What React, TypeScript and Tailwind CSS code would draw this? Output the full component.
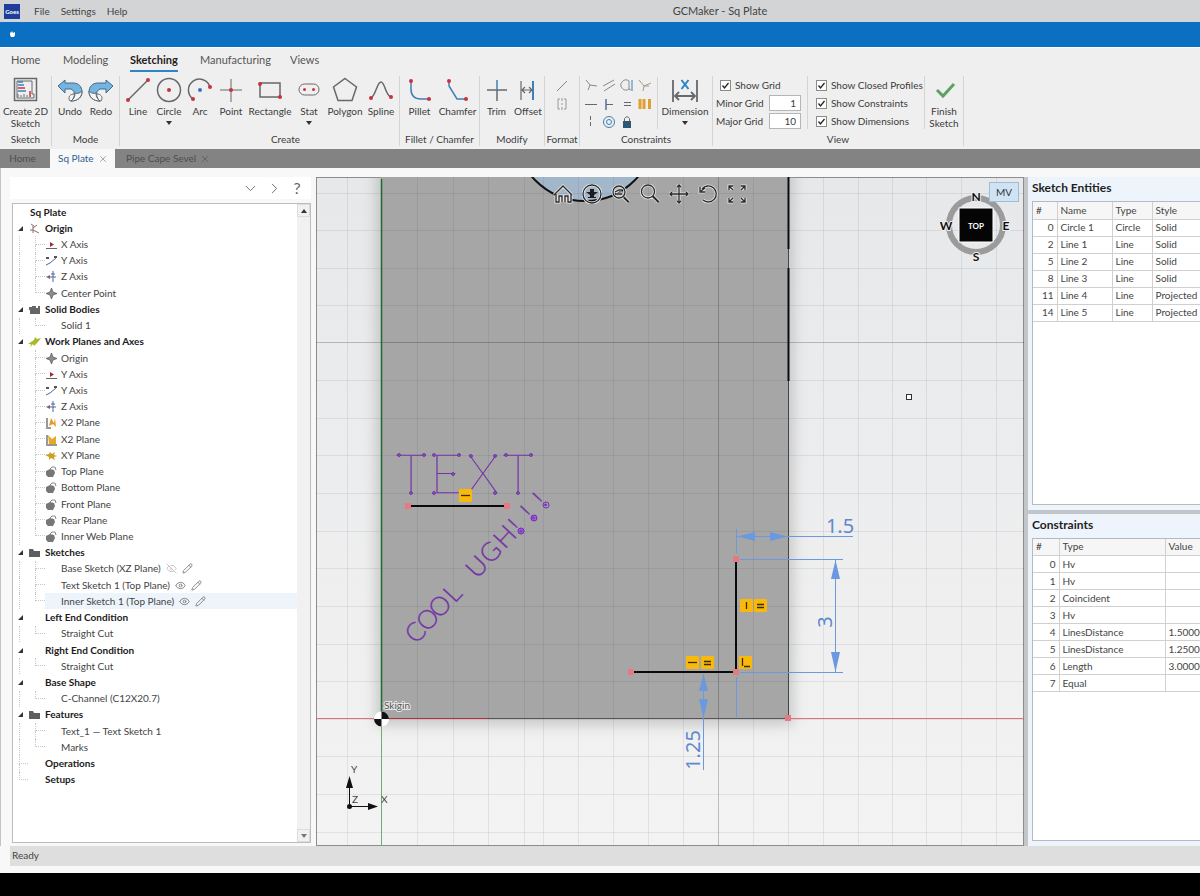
import type { ReactNode } from 'react';
import { ChevronDown, ChevronRight, Eye, EyeOff, Pencil, X } from 'lucide-react';

const RED = '#c8323c';
const GREY = '#66686b';
const BLUE = '#3f7fb8';

/* ---------- ribbon ---------- */

function Dot({ x, y, c = RED }: { x: number; y: number; c?: string }) {
  return <circle cx={x} cy={y} r={2} fill={c} stroke="none" />;
}

function Icon({ children, w = 26 }: { children: ReactNode; w?: number }) {
  return (
    <svg width={w} height={26} viewBox={`0 0 ${w} 26`} fill="none" stroke={GREY} strokeWidth={1.5}>
      {children}
    </svg>
  );
}

const icons = {
  create: (
    <Icon>
      <rect x="1.5" y="1.5" width="22" height="22" />
      <path d="M4 4H19V17H21V21H4Z" strokeWidth="1" />
      <path d="M5 5H10M5 8H11" stroke={BLUE} />
      <path d="M5 11H12M17 14V20" stroke={RED} />
      <path d="M5 14H13" stroke={BLUE} />
      <path d="M5 20V17M8 20V18M11 20V17M14 20V18" strokeWidth="1" />
    </Icon>
  ),
  undo: (
    <Icon>
      <path d="M13 24C11 21 12 18 16 17H20L17 23Z" fill="#f5f5f5" strokeWidth="1" />
      <path d="M1 9L8 3V6H16C22 6 25 10 25 15C25 20 21 24 14 24C18 21 19 14 14 12H8V16Z" fill="#74b4e0" stroke="#44698a" strokeWidth="1" />
      <path d="M25 14C25 20 21 24 14 24C17 22 18 19 18 16C21 17 23 16 25 14Z" fill="#f5f5f5" strokeWidth="1" />
    </Icon>
  ),
  redo: (
    <Icon>
      <path d="M13 24C15 21 14 18 10 17H6L9 23Z" fill="#f5f5f5" strokeWidth="1" />
      <path d="M25 9L18 3V6H10C4 6 1 10 1 15C1 20 5 24 12 24C8 21 7 14 12 12H18V16Z" fill="#74b4e0" stroke="#44698a" strokeWidth="1" />
      <path d="M1 14C1 20 5 24 12 24C9 22 8 19 8 16C5 17 3 16 1 14Z" fill="#f5f5f5" strokeWidth="1" />
    </Icon>
  ),
  line: (
    <Icon>
      <path d="M3 23L23 3" />
      <Dot x={3} y={23} />
      <Dot x={23} y={3} />
    </Icon>
  ),
  circle: (
    <Icon>
      <circle cx="13" cy="13" r="11.5" />
      <Dot x={13} y={13} />
    </Icon>
  ),
  arc: (
    <Icon>
      <path d="M6 22A11 11 0 1 1 23 10" />
      <Dot x={6} y={22} />
      <Dot x={23} y={10} />
      <Dot x={13} y={13} c="#3a6fc4" />
    </Icon>
  ),
  point: (
    <Icon>
      <path d="M13 2V25M2 13H24" strokeWidth="1" />
      <Dot x={13} y={13} />
    </Icon>
  ),
  rectangle: (
    <Icon>
      <path d="M3 6H23V20H3Z" />
      <Dot x={3} y={7} />
      <Dot x={23} y={20} />
    </Icon>
  ),
  slot: (
    <Icon>
      <rect x="3" y="7" width="20" height="11" rx="5.5" strokeWidth="1" />
      <circle cx="8.5" cy="12.5" r="1.5" fill={RED} stroke="none" />
      <circle cx="17.5" cy="12.5" r="1.5" fill={RED} stroke="none" />
    </Icon>
  ),
  polygon: (
    <Icon>
      <path d="M13 1.500L24.500 10L20 23.500H6L1.500 10Z" />
    </Icon>
  ),
  spline: (
    <Icon>
      <path d="M3 21C8 18 9 5 13 5C17 5 17 18 23 20" />
      <Dot x={3} y={21} />
      <Dot x={23} y={20} />
    </Icon>
  ),
  fillet: (
    <Icon>
      <path d="M4 4V12C4 19 7 22 14 22H22" stroke={BLUE} />
      <Dot x={4} y={4} />
      <Dot x={22} y={22} />
    </Icon>
  ),
  chamfer: (
    <Icon>
      <path d="M4 4V9L12 22H21" stroke={BLUE} />
      <Dot x={4} y={4} />
      <Dot x={21} y={22} />
    </Icon>
  ),
  trim: (
    <Icon>
      <path d="M3 13H23" />
      <path d="M13 3V13" stroke={BLUE} />
      <path d="M13 13V24" />
    </Icon>
  ),
  offset: (
    <Icon>
      <path d="M6 4V23M6 13H17M10 10L7 13L10 16M14 10L17 13L14 16" strokeWidth="1.2" />
      <path d="M18 4V23" stroke={BLUE} strokeWidth="2" />
    </Icon>
  ),
  dimension: (
    <Icon w={28}>
      <path d="M2 3V25M26 3V25M4 19H24M8 15L4 19L8 23M20 15L24 19L20 23" strokeWidth="1.8" />
      <path d="M10.500 3L17.500 12M17.500 3L10.500 12" stroke="#2f83c5" strokeWidth="2" />
    </Icon>
  ),
  finish: (
    <Icon>
      <path d="M6 13L12 19L23 7" stroke="#5fa067" strokeWidth="3" />
    </Icon>
  ),
};

function Caret() {
  return <span className="mt-1 border-x-3 border-t-4 border-x-transparent border-t-[#333]" />;
}

function Tool({ icon, label, width, caret }: { icon: ReactNode; label: string; width: string; caret?: boolean }) {
  return (
    <button className={`flex flex-col items-center ${width}`}>
      {icon}
      <span className="mt-[2px] text-[10px] leading-[12px] whitespace-pre-line">{label}</span>
      {caret && <Caret />}
    </button>
  );
}

interface GroupProps {
  name: string;
  width: string;
  nameClass?: string;
  children: ReactNode;
}

function Group({ name, width, nameClass = '', children }: GroupProps) {
  return (
    <section className={`flex h-[70px] shrink-0 flex-col items-center border-r border-[#d4d4d4] ${width}`}>
      <div className="flex h-[58px] w-full justify-center pt-px">{children}</div>
      <h2 className={`text-[10px] leading-[14px] whitespace-nowrap ${nameClass}`}>{name}</h2>
    </section>
  );
}

function Check({ label }: { label: string }) {
  return (
    <label className="flex h-[18px] shrink-0 items-center gap-1 text-[10px] whitespace-nowrap">
      <span className="relative h-[11px] w-[11px]">
        <input type="checkbox" defaultChecked className="block h-[11px] w-[11px] appearance-none border border-[#8b8b8b] bg-white" />
        <svg className="pointer-events-none absolute inset-0" width="11" height="11" fill="none" stroke="#222" strokeWidth="1.3">
          <path d="M2.500 5.500L4.500 8L8.500 3" />
        </svg>
      </span>
      {label}
    </label>
  );
}

function GridSize({ label, value }: { label: string; value: string }) {
  return (
    <label className="flex h-[18px] shrink-0 items-center justify-between text-[10px] whitespace-nowrap">
      {label}
      <input defaultValue={value} className="h-[16px] w-[32px] border border-[#b5b5b5] bg-white px-1 text-right" />
    </label>
  );
}

const constraintIcons: { name: string; draw: ReactNode }[] = [
  { name: 'Coincident', draw: <path d="M4 3L8 8L15 9M8 8L6 13" stroke="#888" /> },
  { name: 'Parallel', draw: <path d="M3 9L14 3M4 14L15 7" stroke="#888" /> },
  { name: 'Tangent', draw: <><path d="M11 4A5 5 0 1 0 11 12V4M11 12L13 13" stroke="#888" /><path d="M14 3V14" stroke={BLUE} /></> },
  { name: 'Perpendicular', draw: <path d="M3 3L8 9L15 6M8 9L7 14M8 9H13" stroke="#a69c88" /> },
  { name: 'Horizontal', draw: <path d="M3 9.500H15" /> },
  { name: 'Midpoint', draw: <><path d="M6 4V15" stroke="#5b6c97" strokeWidth="1.5" /><path d="M6 9.500H13" /></> },
  { name: 'Equal', draw: <path d="M6 7.500H13M6 10.500H13" /> },
  { name: 'Symmetric', draw: <path d="M4 4V14M8 4V14M13.500 4V14" stroke="#e0a030" strokeWidth="3" /> },
  { name: 'Vertical', draw: <path d="M8.500 3V15" strokeDasharray="4 2" /> },
  { name: 'Concentric', draw: <><circle cx="9" cy="9" r="5.500" stroke={BLUE} /><circle cx="9" cy="9" r="2.500" stroke={BLUE} /></> },
  { name: 'Lock', draw: <><rect x="5" y="8" width="8" height="7" fill="#2c5876" stroke="none" /><path d="M6.500 8V5.500Q9 2 11.500 5.500V8" /></> },
];

function SmallIcon({ name, children }: { name: string; children: ReactNode }) {
  return (
    <button aria-label={name} className="h-[18px] w-[18px]">
      <svg width="18" height="18" fill="none" stroke={GREY} strokeWidth="1">
        {children}
      </svg>
    </button>
  );
}

const ribbonTabs = [
  { name: 'Home', width: 'w-[52px]' },
  { name: 'Modeling', width: 'w-[67px]' },
  { name: 'Sketching', width: 'w-[70px]', active: true },
  { name: 'Manufacturing', width: 'w-[90px]' },
  { name: 'Views', width: 'w-[52px]' },
];

function Ribbon() {
  return (
    <header className="h-[102px] shrink-0 overflow-hidden border-t border-white bg-[#efefef] text-[#3c3c3c]">
      <nav className="flex h-[28px] pl-[11px] text-[11px] text-[#555]">
        {ribbonTabs.map((tab) => (
          <div key={tab.name} className={`shrink-0 ${tab.width}`}>
            <button
              className={
                tab.active
                  ? 'h-[24px] border-b-2 border-[#2c86c8] pt-[2px] font-bold text-[#1c1c1c]'
                  : 'h-[24px] border-b-2 border-transparent pt-[2px]'
              }
            >
              {tab.name}
            </button>
          </div>
        ))}
      </nav>
      <div className="flex">
        <Group name="Sketch" width="w-[52px]">
          <Tool icon={icons.create} label={'Create 2D\nSketch'} width="w-[52px]" />
        </Group>
        <Group name="Mode" width="w-[68px]">
          <Tool icon={icons.undo} label="Undo" width="w-[31px]" />
          <Tool icon={icons.redo} label="Redo" width="w-[31px]" />
        </Group>
        <Group name="Create" width="w-[280px]" nameClass="pl-[52px]">
          <Tool icon={icons.line} label="Line" width="w-[31px]" />
          <Tool icon={icons.circle} label="Circle" width="w-[31px]" caret />
          <Tool icon={icons.arc} label="Arc" width="w-[31px]" />
          <Tool icon={icons.point} label="Point" width="w-[31px]" />
          <Tool icon={icons.rectangle} label="Rectangle" width="w-[47px]" />
          <Tool icon={icons.slot} label="Stat" width="w-[31px]" caret />
          <Tool icon={icons.polygon} label="Polygon" width="w-[41px]" />
          <Tool icon={icons.spline} label="Spline" width="w-[31px]" />
        </Group>
        <Group name="Fillet / Chamfer" width="w-[80px]">
          <Tool icon={icons.fillet} label="Pillet" width="w-[36px]" />
          <Tool icon={icons.chamfer} label="Chamfer" width="w-[40px]" />
        </Group>
        <Group name="Modify" width="w-[65px]">
          <Tool icon={icons.trim} label="Trim" width="w-[32px]" />
          <Tool icon={icons.offset} label="Offset" width="w-[31px]" />
        </Group>
        <Group name="Format" width="w-[35px]">
          <div className="flex flex-col">
            <SmallIcon name="Construction line">
              <path d="M4 14L14 4" stroke="#888" />
            </SmallIcon>
            <SmallIcon name="Centerline">
              <path d="M5 4V14M13 4V14M9 3V6M9 8V10M9 12V15M5 4H7M5 14H7M11 4H13M11 14H13" stroke="#999" />
            </SmallIcon>
          </div>
        </Group>
        <Group name="Constraints" width="w-[133px]">
          <div className="flex h-[52px] w-[78px] border-r border-[#d4d4d4] pl-[2px]">
            <div className="grid h-[54px] grid-cols-4">
              {constraintIcons.map((c) => (
                <SmallIcon key={c.name} name={c.name}>
                  {c.draw}
                </SmallIcon>
              ))}
            </div>
          </div>
          <Tool icon={icons.dimension} label="Dimension" width="w-[54px]" caret />
        </Group>
        <Group name="View" width="w-[251px]">
          <div className="-mt-px flex h-[53px] w-[95px] flex-col border-r border-[#d4d4d4] pr-[6px] pl-[3px]">
            <div className="pl-1">
              <Check label="Show Grid" />
            </div>
            <GridSize label="Minor Grid" value="1" />
            <GridSize label="Major Grid" value="10" />
          </div>
          <div className="-mt-px flex h-[53px] w-[117px] flex-col border-r border-[#d4d4d4] pl-2">
            <Check label="Show Closed Profiles" />
            <Check label="Show Constraints" />
            <Check label="Show Dimensions" />
          </div>
          <Tool icon={icons.finish} label={'Finish\nSketch'} width="w-[38px]" />
        </Group>
      </div>
    </header>
  );
}

/* ---------- model tree ---------- */

type TreeIcon = 'origin' | 'x' | 'y' | 'z' | 'point' | 'solid' | 'planes' | 'xz' | 'yz' | 'xy' | 'plane' | 'folder';

const treeIcons: Record<TreeIcon, ReactNode> = {
  origin: <path d="M5 11V4M5 8L11 11M5 6L9 3M3 2L6 4M2 8H5" stroke="#8a6d68" fill="none" />,
  x: <><path d="M1 10.500H12" stroke="#666" /><path d="M5 4L9 6.500L5 9Z" fill="#a8283c" /></>,
  y: <><path d="M1 11L5 9L11 4" stroke="#4a6a9c" fill="none" /><path d="M1 3H4V5H1ZM9 2H12V4H9Z" fill="#555" /></>,
  z: <><path d="M8 1V12M6 4H10M5 7H11" stroke="#4a6a9c" fill="none" /><path d="M1 7L5 5V9Z" fill="#8c5a7c" /></>,
  point: <path d="M6.500 1L8 5L12 6.500L8 8L6.500 12L5 8L1 6.500L5 5Z" fill="#8c8c8c" stroke="#555" strokeWidth=".7" />,
  solid: <path d="M1 4H4V3H8V5H10V3H12V11H2V7H1Z" fill="#666" />,
  planes: <path d="M0 9L6 5L7 2L9 4L13 3L10 7L6 11L5 9L2 12L3 9Z" fill="#a9b82c" />,
  xz: <><path d="M2 2V12H6" stroke="#999" fill="none" strokeWidth="2" /><path d="M4 10L6 2L9 7L10 2L11 11L8 8Z" fill="#e09b2d" /></>,
  yz: <><path d="M2 2V12H12" stroke="#999" fill="none" strokeWidth="2" /><path d="M3 2L7 6L11 3V11H4Z" fill="#e5a82a" /></>,
  xy: <path d="M0 6L4 5L5 3L7 5L10 3L9 6L12 7L9 8L10 11L6 9L4 11V8Z" fill="#c9a227" />,
  plane: <><path d="M1 6L5 4L9 5L10 8L8 12H3L1 10Z" fill="#777" /><path d="M5 4L7 2H10L11 5" stroke="#888" fill="none" /></>,
  folder: <path d="M1 3H5L6 5H12V11H1Z" fill="#5e5e5e" />,
};

interface Leaf {
  label: string;
  icon?: TreeIcon;
  visibility?: 'on' | 'off';
  selected?: boolean;
}

interface Branch {
  label: string;
  icon?: TreeIcon;
  items: Leaf[];
}

const tree: Branch[] = [
  {
    label: 'Origin',
    icon: 'origin',
    items: [
      { label: 'X Axis', icon: 'x' },
      { label: 'Y Axis', icon: 'y' },
      { label: 'Z Axis', icon: 'z' },
      { label: 'Center Point', icon: 'point' },
    ],
  },
  { label: 'Solid Bodies', icon: 'solid', items: [{ label: 'Solid 1' }] },
  {
    label: 'Work Planes and Axes',
    icon: 'planes',
    items: [
      { label: 'Origin', icon: 'point' },
      { label: 'Y Axis', icon: 'x' },
      { label: 'Y Axis', icon: 'y' },
      { label: 'Z Axis', icon: 'z' },
      { label: 'X2 Plane', icon: 'xz' },
      { label: 'X2 Plane', icon: 'yz' },
      { label: 'XY Plane', icon: 'xy' },
      { label: 'Top Plane', icon: 'plane' },
      { label: 'Bottom Plane', icon: 'plane' },
      { label: 'Front Plane', icon: 'plane' },
      { label: 'Rear Plane', icon: 'plane' },
      { label: 'Inner Web Plane', icon: 'plane' },
    ],
  },
  {
    label: 'Sketches',
    icon: 'folder',
    items: [
      { label: 'Base Sketch (XZ Plane)', visibility: 'off' },
      { label: 'Text Sketch 1 (Top Plane)', visibility: 'on' },
      { label: 'Inner Sketch 1 (Top Plane)', visibility: 'on', selected: true },
    ],
  },
  { label: 'Left End Condition', items: [{ label: 'Straight Cut' }] },
  { label: 'Right End Condition', items: [{ label: 'Straight Cut' }] },
  { label: 'Base Shape', items: [{ label: 'C-Channel (C12X20.7)' }] },
  { label: 'Features', icon: 'folder', items: [{ label: 'Text_1 — Text Sketch 1' }, { label: 'Marks' }] },
  { label: 'Operations', items: [] },
  { label: 'Setups', items: [] },
];

function Glyph({ icon }: { icon?: TreeIcon }) {
  return (
    <svg width="13" height="13" className="shrink-0">
      {icon && treeIcons[icon]}
    </svg>
  );
}

function Elbow({ last, width }: { last: boolean; width: string }) {
  return (
    <span className={`flex shrink-0 flex-col self-stretch ${width}`}>
      <span className="h-1/2 border-b border-l border-dotted border-[#c8c8c8]" />
      <span className={last ? 'h-1/2' : 'h-1/2 border-l border-dotted border-[#c8c8c8]'} />
    </span>
  );
}

function BranchRow({ branch, last }: { branch: Branch; last: boolean }) {
  return (
    <li className="flex min-h-0 flex-1 items-center pl-[6px]">
      {branch.items.length > 0 ? (
        <button aria-label={`Collapse ${branch.label}`} className="w-[9px] shrink-0">
          <svg width="5" height="5" className="-ml-px">
            <path d="M5 0V5H0Z" fill="#333" />
          </svg>
        </button>
      ) : (
        <Elbow last={last} width="w-[9px]" />
      )}
      <Glyph icon={branch.icon} />
      <span className="ml-1 font-bold text-[#1b1b1b]">{branch.label}</span>
    </li>
  );
}

function LeafRow({ leaf, last }: { leaf: Leaf; last: boolean }) {
  return (
    <li className="flex min-h-0 flex-1 items-center pl-[6px]">
      <span className="w-[16px] shrink-0 self-stretch border-l border-dotted border-[#c8c8c8]" />
      <Elbow last={last} width="w-[10px]" />
      <span className={`flex flex-1 items-center self-stretch ${leaf.selected ? 'bg-[#edf4fb]' : ''}`}>
        <Glyph icon={leaf.icon} />
        <span className="ml-[3px]">{leaf.label}</span>
        {leaf.visibility && (
          <span className="ml-[5px] flex items-center gap-[5px] text-[#808080]">
            {leaf.visibility === 'on' ? <Eye size={11} /> : <EyeOff size={11} className="text-[#c4c4c4]" />}
            <Pencil size={11} />
          </span>
        )}
      </span>
    </li>
  );
}

function ModelTree() {
  return (
    <aside className="flex w-[311px] shrink-0 flex-col border-l border-[#c4c4c4] pl-[9px]">
      <div className="mt-[9px] flex h-[22px] items-center gap-[7px] bg-white pr-[7px] text-[#666]">
        <input aria-label="Filter" className="min-w-0 flex-1 outline-none" />
        <button aria-label="Next"><ChevronDown size={17} strokeWidth={1.3} /></button>
        <button aria-label="Forward"><ChevronRight size={17} strokeWidth={1.3} /></button>
        <button aria-label="Help" className="w-[14px] text-[16px] leading-none">?</button>
      </div>
      <div className="mt-[4px] mb-[3px] ml-[2px] flex min-h-0 flex-1 border border-[#b9bcc0] bg-white">
        <ul className="flex h-[584px] flex-1 flex-col text-[10px] text-[#444]">
          <li className="flex flex-1 items-center pl-[17px] font-bold text-[#1b1b1b]">Sq Plate</li>
          {tree.map((branch, i) => [
            <BranchRow key={branch.label} branch={branch} last={i === tree.length - 1} />,
            ...branch.items.map((leaf, j) => (
              <LeafRow key={`${branch.label}-${j}`} leaf={leaf} last={j === branch.items.length - 1} />
            )),
          ])}
        </ul>
        <div className="flex w-[13px] flex-col justify-between bg-[#f1f1f1]">
          <button aria-label="Scroll up" className="flex h-[13px] items-center justify-center border border-[#dcdcdc]">
            <svg width="6" height="4"><path d="M0 4L3 0L6 4Z" fill="#333" /></svg>
          </button>
          <button aria-label="Scroll down" className="flex h-[13px] items-center justify-center border border-[#dcdcdc]">
            <svg width="6" height="4"><path d="M0 0L3 4L6 0Z" fill="#777" /></svg>
          </button>
        </div>
      </div>
    </aside>
  );
}

/* ---------- sketch canvas ---------- */

const gridX = [31, 65, 101, 137, 172, 208, 227, 262, 297, 332, 367, 402, 437, 472, 507, 542, 576, 610, 645, 680];
const gridY = [16, 53, 91, 128, 165, 203, 241, 278, 316, 354, 391, 429, 467, 504, 542, 579, 617, 655];

const textNodes = [
  [83, 278], [108, 278], [95, 316], [118, 278], [143, 278], [137, 297], [155, 279], [179, 279],
  [179, 316], [154, 316], [190, 278], [215, 278], [202, 316], [118, 316],
];

function Handle({ x, y }: { x: number; y: number }) {
  return <rect x={x - 3} y={y - 3} width="6" height="6" fill="#e57a83" />;
}

function Badge({ x, y, d }: { x: number; y: number; d: string }) {
  return (
    <g transform={`translate(${x} ${y})`}>
      <rect width="13" height="13" rx="1" fill="#f8b80c" />
      <path d={d} stroke="#3b2c00" strokeWidth="1.3" fill="none" />
    </g>
  );
}

const EQUAL = 'M3 5.500H10M3 8.500H10';
const LEVEL = 'M2 6.500H11';

function Drawing() {
  return (
    <svg className="absolute inset-0 h-full w-full" aria-label="Sketch">
      <rect x="60" y="-20" width="417" height="568" fill="#9b9c9c" className="blur-[7px]" opacity=".5" />
      <rect x="65" y="0" width="407" height="541" fill="#a5a6a5" />
      <circle cx="269" cy="-46" r="70" fill="#a3b7ca" stroke="#111" strokeWidth="2" />
      {gridX.map((x) => (
        <path key={x} d={`M${x}.500 0V4000`} stroke={x === 402 ? '#00000038' : '#1a1a4014'} />
      ))}
      {gridY.map((y) => (
        <path key={y} d={`M0 ${y}.500H4000`} stroke={y === 165 ? '#00000038' : '#1a1a4014'} />
      ))}

      <path d="M65 541.500H472" stroke="#555" />
      <path d="M472.500 0V541" stroke="#444" />
      <path d="M472.500 0V72M472.500 91V204" stroke="#0c0c0c" strokeWidth="2" />
      <path d="M0 541.500H65M472 541.500H4000" stroke="#dc7177" />
      <path d="M65 541.500H172" stroke="#b3303a" />
      <path d="M65.500 2V542" stroke="#1f6a2d" strokeWidth="1.5" />
      <path d="M65.500 542V4000" stroke="#6fae70" />

      <g fill="#7432a8" stroke="#7432a8" fontFamily="Lato, sans-serif" textAnchor="middle">
        <text x="95 130 167 202" y="316" fontSize="53" fontWeight="100" strokeWidth=".4">TEXT</text>
        <g transform="translate(102 466) rotate(-47)">
          <text x="6 24 42 60 78 96 116 137 152 170 188" y="0" fontSize="26" fontWeight="300" strokeWidth=".3">COOL UGH!!!</text>
        </g>
      </g>
      {textNodes.map(([x, y]) => (
        <circle key={`${x}-${y}`} cx={x} cy={y} r="1.500" fill="#8a52b8" stroke="#6b2c9e" strokeWidth=".8" />
      ))}
      <g fill="#8a3fd0" fillOpacity=".6" stroke="#7a27cf">
        <circle cx="205" cy="354" r="3" />
        <circle cx="218" cy="341" r="3" />
        <circle cx="230" cy="328" r="3" fillOpacity="0" />
      </g>

      <path d="M92 329H191M315 495H420V382" stroke="#0a0a0a" strokeWidth="2" fill="none" />
      <Handle x={92} y={329} />
      <Handle x={191} y={329} />
      <Handle x={420} y={382} />
      <Handle x={420} y={495} />
      <Handle x={315} y={495} />
      <Handle x={472} y={541} />

      <g stroke="#6b98de" fill="#6b98de">
        <path d="M420.500 352V376M420.500 500V540M420 359.500H537M424 382.500H527M424 495.500H527M519.500 383V495M387.500 497V593" />
        <path d="M422 359.500L439 355V364ZM471 359.500L454 355V364Z" stroke="none" />
        <path d="M519.500 383L515 402H524ZM519.500 495L515 475H524Z" stroke="none" />
        <path d="M387.500 497L383 514H392ZM387.500 541L383 522H392Z" stroke="none" />
      </g>
      <g fill="#6089cd" fontFamily="'Noto Sans', sans-serif" fontSize="20" textAnchor="middle">
        <text x="524" y="356">1.5</text>
        <text transform="translate(516 445) rotate(-90)">3</text>
        <text transform="translate(384 573) rotate(-90)">1.25</text>
      </g>

      <Badge x={143} y={312} d={LEVEL} />
      <Badge x={424} y={422} d="M6.500 3V10" />
      <Badge x={438} y={422} d={EQUAL} />
      <Badge x={370} y={479} d={LEVEL} />
      <Badge x={385} y={479} d={EQUAL} />
      <Badge x={423} y={479} d="M3.500 2V10M5 10.500H11" />

      <circle cx="65.500" cy="542" r="7.500" fill="#fff" />
      <path d="M65.500 542V534.500A7.500 7.500 0 0 1 73 542ZM65.500 542V549.500A7.500 7.500 0 0 1 58 542Z" fill="#111" />
      <text x="68" y="532" fontSize="10" fill="#555" stroke="#e8e8e8" strokeWidth="2" paintOrder="stroke">Skigin</text>

      <g stroke="#111" fill="#111">
        <path d="M33.500 629V605M34 629.500H55" />
        <path d="M33.500 599L30 611H37ZM62 629.500L52 626V633Z" stroke="none" />
        <circle cx="33.500" cy="629.500" r="2.500" stroke="none" />
      </g>
      <g fill="#444" fontSize="10">
        <text x="35" y="596">Y</text>
        <text x="36" y="626">Z</text>
        <text x="65" y="626">X</text>
      </g>

      <rect x="590.500" y="217.500" width="5" height="5" fill="#fff" stroke="#333" />
    </svg>
  );
}

const viewTools: { name: string; d: string; solid?: string }[] = [
  { name: 'Home view', d: 'M1 11L10 2L19 11M3 10V18H6V12H9V18M12 18V12H15V18H18V10' },
  { name: 'Look at', d: 'M10 1A9 9 0 1 0 10 19A9 9 0 1 0 10 1', solid: 'M4 8H8V5H12V8H16L12 11V13H14V14H6V13H8V11Z' },
  { name: 'Zoom window', d: 'M8 2A6 6 0 1 0 8 14A6 6 0 1 0 8 2M13 13L18 18M12.500 13.500L17.500 18.500M4 8L8 6H11M5 10H11' },
  { name: 'Zoom', d: 'M8 1A6.500 6.500 0 1 0 8 14A6.500 6.500 0 1 0 8 1M13 12L19 18M12.500 12.500L18.500 18.500' },
  { name: 'Pan', d: 'M10 1V19M1 10H19M8 3L10 1L12 3M8 17L10 19L12 17M3 8L1 10L3 12M17 8L19 10L17 12' },
  { name: 'Rotate', d: 'M4 5A8 8 0 1 1 5 16M2 3V8H7M3 7L7 4' },
  { name: 'Fit', d: 'M2 6V2H6M2 2L6 6M14 2H18V6M18 2L14 6M2 14V18H6M2 18L6 14M18 14V18H14M18 18L14 14' },
];

function Canvas() {
  return (
    <main className="relative min-w-0 flex-1 overflow-hidden bg-linear-to-b from-[#e7e8ea] to-[#f3f3f3] outline -outline-offset-1 outline-[#8d8d8d]">
      <Drawing />
      <div className="absolute top-[7px] left-[232px] flex">
        {viewTools.map((tool) => (
          <button key={tool.name} aria-label={tool.name} className="flex w-[29px] justify-center">
            <svg width="20" height="20" fill="none">
              <path d={tool.d} stroke="#e4e4e4" strokeWidth="3" />
              <path d={tool.d} stroke="#2b2b2b" strokeWidth="1.3" />
              {tool.solid && <path d={tool.solid} fill="#1d1d1d" />}
            </svg>
          </button>
        ))}
      </div>
      <div className="absolute top-[10px] right-[12px]">
        <svg width="72" height="78" aria-label="View compass">
          <circle cx="36" cy="38" r="27" fill="none" stroke="#9b9b9b" strokeWidth="6" />
          <rect x="19" y="21" width="34" height="34" fill="#050505" stroke="#fff" />
          <g fontSize="12" fontWeight="700" textAnchor="middle" fill="#111" stroke="#eee" strokeWidth="2" paintOrder="stroke">
            <text x="36" y="14">N</text>
            <text x="6" y="43">W</text>
            <text x="66" y="43">E</text>
            <text x="36" y="74">S</text>
          </g>
          <text x="36" y="42" fontSize="8" fontWeight="700" textAnchor="middle" fill="#fff">TOP</text>
        </svg>
      </div>
      <button className="absolute top-[5px] right-[5px] h-[20px] w-[30px] border border-[#9fbdd8] bg-[#cfe3f5] text-[10px] text-[#333]">
        MV
      </button>
    </main>
  );
}

/* ---------- data panels ---------- */

interface Column {
  name: string;
  width: string;
}

function DataPanel({ title, columns, rows }: { title: string; columns: Column[]; rows: string[][] }) {
  return (
    <section className="flex min-h-0 flex-1 flex-col bg-[#edf4fb] pl-[4px]">
      <h2 className="h-[24px] shrink-0 text-[12px] leading-[22px] font-bold text-[#1f1f1f]">{title}</h2>
      <div className="mb-[5px] min-h-0 flex-1 overflow-hidden border border-r-0 border-[#b4bac0] bg-white">
        <table className="w-full table-fixed border-collapse text-[10px] text-[#444]">
          <thead className="bg-[#f6f6f6]">
            <tr className="h-[17px]">
              {columns.map((col) => (
                <th key={col.name} className={`border-r border-b border-[#d0d0d0] px-[3px] text-left font-normal last:border-r-0 ${col.width}`}>
                  {col.name}
                </th>
              ))}
            </tr>
          </thead>
          <tbody>
            {rows.map((row) => (
              <tr key={row[0]} className="h-[17px]">
                {row.map((cell, i) => (
                  <td
                    key={i}
                    className={`border-r border-b border-[#d0d0d0] pl-[3px] whitespace-nowrap last:border-r-0 ${i === 0 ? 'pr-[3px] text-right' : ''}`}
                  >
                    {cell}
                  </td>
                ))}
              </tr>
            ))}
          </tbody>
        </table>
      </div>
    </section>
  );
}

const entities = [
  ['0', 'Circle 1', 'Circle', 'Solid'],
  ['2', 'Line 1', 'Line', 'Solid'],
  ['5', 'Line 2', 'Line', 'Solid'],
  ['8', 'Line 3', 'Line', 'Solid'],
  ['11', 'Line 4', 'Line', 'Projected'],
  ['14', 'Line 5', 'Line', 'Projected'],
];

const constraints = [
  ['0', 'Hv', ''],
  ['1', 'Hv', ''],
  ['2', 'Coincident', ''],
  ['3', 'Hv', ''],
  ['4', 'LinesDistance', '1.5000'],
  ['5', 'LinesDistance', '1.2500'],
  ['6', 'Length', '3.0000'],
  ['7', 'Equal', ''],
];

function Panels() {
  return (
    <aside className="flex w-[176px] shrink-0 flex-col border-l-4 border-[#c3c6c9]">
      <DataPanel
        title="Sketch Entities"
        columns={[
          { name: '#', width: 'w-[24px]' },
          { name: 'Name', width: 'w-[55px]' },
          { name: 'Type', width: 'w-[40px]' },
          { name: 'Style', width: '' },
        ]}
        rows={entities}
      />
      <div className="h-[4px] bg-[#c3c6c9]" />
      <DataPanel
        title="Constraints"
        columns={[
          { name: '#', width: 'w-[26px]' },
          { name: 'Type', width: 'w-[106px]' },
          { name: 'Value', width: '' },
        ]}
        rows={constraints}
      />
    </aside>
  );
}

export default function App() {
  return (
    <div className="h-screen bg-black pb-[23px] font-['Lato',sans-serif]">
      <div className="flex h-full flex-col bg-[#f8f8f8]">
        <div className="grid h-[22px] shrink-0 grid-cols-[50%_20%_30%] items-center bg-[#d3d4d6] text-[#444]">
          <div className="flex items-center text-[10px]">
            <span className="ml-1 flex h-[15px] w-[16px] items-center justify-center bg-[#1d3f9a] text-[6px] font-bold text-white">
              Goes
            </span>
            <button className="ml-[14px]">File</button>
            <button className="ml-[11px]">Settings</button>
            <button className="ml-[11px]">Help</button>
          </div>
          <h1 className="text-center text-[11px] whitespace-nowrap">GCMaker - Sq Plate</h1>
        </div>
        <div className="flex h-[25px] shrink-0 items-center bg-[#0b70c1] pl-[9px]">
          <svg width="7" height="7">
            <path d="M1 1L2 2L3 0L4 2L6 1V4L5 6H2L1 4Z" fill="#fff" />
          </svg>
        </div>
        <Ribbon />
        <nav className="flex h-[19px] shrink-0 bg-[#838383] text-[10px] text-[#4e4e4e]">
          <button className="w-[50px] pr-[5px]">Home</button>
          <button className="flex w-[65px] items-center gap-1 bg-[#f8f8f8] pl-2 text-[#2d6290]">
            Sq Plate <X size={10} strokeWidth={1.5} className="text-[#777]" />
          </button>
          <button className="flex items-center gap-1 pl-[11px]">
            Pipe Cape Sevel <X size={10} strokeWidth={1.5} />
          </button>
        </nav>
        <div className="flex min-h-0 flex-1">
          <ModelTree />
          <div className="flex min-w-0 flex-1 pt-[9px] pl-[5px]">
            <Canvas />
            <Panels />
          </div>
        </div>
        <footer className="mb-[7px] ml-[10px] flex h-[20px] shrink-0 items-center bg-[#dedede] pb-[2px] pl-[2px] text-[10px] text-[#444]">
          Ready
        </footer>
      </div>
    </div>
  );
}
